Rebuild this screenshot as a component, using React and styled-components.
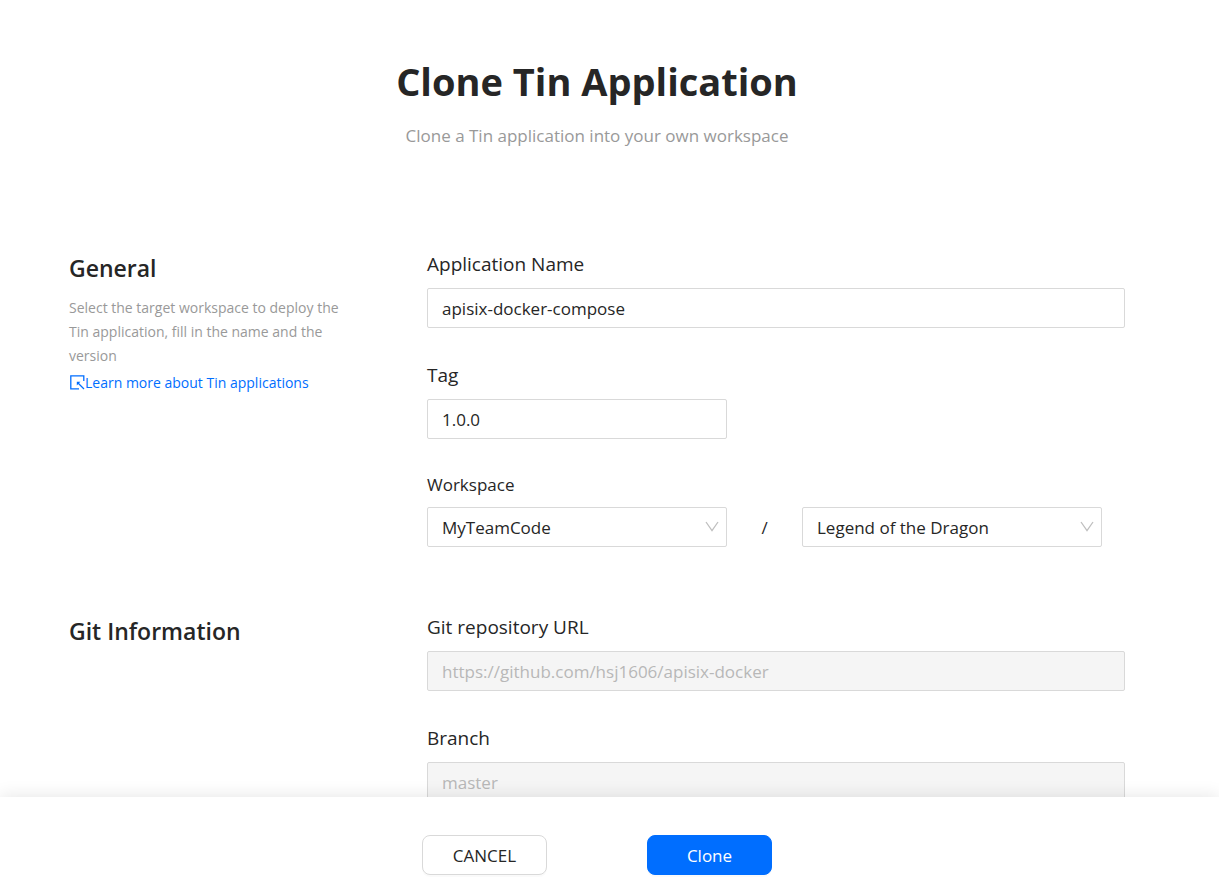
import React from 'react';
import styled, { createGlobalStyle } from 'styled-components';

const GlobalStyles = createGlobalStyle`
  * {
    box-sizing: border-box;
  }
  body {
    margin: 0;
    background: #fff;
    color: #262626;
    font-family: 'Open Sans', 'Noto Sans', sans-serif;
    font-size: 17px;
  }
  input, select, button {
    font-family: inherit;
    font-size: inherit;
  }
`;

const PageStyles = styled.div`
  display: flex;
  flex-direction: column;
  height: 100vh;
`;

const ContentStyles = styled.main`
  flex: 1;
  min-height: 0;
  overflow-y: auto;
  scrollbar-width: none;
  padding: 54px 94px 48px 69px;
`;

const HeaderStyles = styled.header`
  text-align: center;
  margin-bottom: 101px;
`;

const Title = styled.h1`
  margin: 0 0 15px;
  font-size: 38px;
  line-height: 54px;
  font-weight: 700;
`;

const Subtitle = styled.p`
  margin: 0;
  line-height: 26px;
  color: #999;
`;

const SectionStyles = styled.section`
  display: grid;
  grid-template-columns: 283px 1fr;
  column-gap: 75px;
  margin-bottom: 66px;
`;

const SectionTitle = styled.h2`
  margin: 0 0 10px;
  font-size: 23px;
  line-height: 36px;
  font-weight: 600;
`;

const Description = styled.p`
  margin: 0 0 3px;
  font-size: 14px;
  line-height: 24px;
  color: #999;
`;

const LearnMore = styled.a`
  display: flex;
  align-items: center;
  font-size: 14px;
  line-height: 24px;
  color: #006eff;
  text-decoration: none;
`;

const Fields = styled.div`
  display: flex;
  flex-direction: column;
  gap: 33px;
`;

const Field = styled.div`
  display: flex;
  flex-direction: column;
  gap: 10px;
`;

const Label = styled.label`
  font-size: ${({ $small }) => ($small ? '17px' : '19px')};
  line-height: ${({ $small }) => ($small ? '25px' : '28px')};
`;

const TextInput = styled.input`
  width: 100%;
  max-width: ${({ $short }) => ($short ? '300px' : 'none')};
  height: 40px;
  padding: 0 14px;
  border: 1px solid #d9d9d9;
  border-radius: 2px;
  background: #fff;
  color: #262626;
  &:disabled {
    background: #f5f5f5;
    color: #b8b8b8;
  }
`;

const WorkspaceRow = styled.div`
  display: flex;
  align-items: center;
`;

const Separator = styled.span`
  width: 75px;
  text-align: center;
`;

const SelectBox = styled.div`
  position: relative;
  width: 300px;
  select {
    width: 100%;
    height: 40px;
    padding: 0 36px 0 14px;
    border: 1px solid #d9d9d9;
    border-radius: 2px;
    background: #fff;
    color: #262626;
    appearance: none;
  }
  svg {
    position: absolute;
    top: 14px;
    right: 8px;
    pointer-events: none;
  }
`;

const FooterStyles = styled.footer`
  position: relative;
  display: flex;
  justify-content: center;
  gap: 100px;
  padding: 38px 25px 19px 0;
  background: #fff;
  box-shadow: 0 -2px 16px rgba(0, 0, 0, 0.09);
`;

const Button = styled.button`
  width: 125px;
  height: 40px;
  padding: 0;
  border: 1px solid ${({ $primary }) => ($primary ? '#006eff' : '#d9d9d9')};
  border-radius: 8px;
  background: ${({ $primary }) => ($primary ? '#006eff' : '#fff')};
  color: ${({ $primary }) => ($primary ? '#fff' : '#262626')};
  box-shadow: 0 2px 0 rgba(0, 0, 0, 0.02);
`;

function LinkIcon() {
  return (
    <svg width="16" height="18" viewBox="0 0 16 18" fill="none" stroke="currentColor">
      <path d="M14.8 7V1.8H1.8V14.8H10" strokeWidth="1.3" />
      <path d="M9 9L15 15" strokeWidth="1.3" />
      <path d="M7.8 7.8H11.4L7.8 11.4Z" fill="currentColor" stroke="none" />
    </svg>
  );
}

function ArrowDown() {
  return (
    <svg width="14" height="12" viewBox="0 0 14 12" fill="none" stroke="#bfbfbf">
      <path d="M1 1L7 9.5L13 1" strokeWidth="1.3" />
    </svg>
  );
}

function Select({ id, value, label }) {
  return (
    <SelectBox>
      <select id={id} defaultValue={value} aria-label={label}>
        <option value={value}>{value}</option>
      </select>
      <ArrowDown />
    </SelectBox>
  );
}

function GeneralSection() {
  return (
    <SectionStyles>
      <div>
        <SectionTitle>General</SectionTitle>
        <Description>
          Select the target workspace to deploy the Tin application, fill in the
          name and the version
        </Description>
        <LearnMore href="#learn">
          <LinkIcon />
          Learn more about Tin applications
        </LearnMore>
      </div>
      <Fields>
        <Field>
          <Label htmlFor="name">Application Name</Label>
          <TextInput id="name" defaultValue="apisix-docker-compose" />
        </Field>
        <Field>
          <Label htmlFor="tag">Tag</Label>
          <TextInput id="tag" $short defaultValue="1.0.0" />
        </Field>
        <Field>
          <Label htmlFor="team" $small>Workspace</Label>
          <WorkspaceRow>
            <Select id="team" value="MyTeamCode" />
            <Separator>/</Separator>
            <Select id="project" value="Legend of the Dragon" label="Project" />
          </WorkspaceRow>
        </Field>
      </Fields>
    </SectionStyles>
  );
}

function GitSection() {
  return (
    <SectionStyles>
      <div>
        <SectionTitle>Git Information</SectionTitle>
      </div>
      <Fields>
        <Field>
          <Label htmlFor="repo">Git repository URL</Label>
          <TextInput id="repo" disabled defaultValue="https://github.com/hsj1606/apisix-docker" />
        </Field>
        <Field>
          <Label htmlFor="branch">Branch</Label>
          <TextInput id="branch" disabled defaultValue="master" />
        </Field>
      </Fields>
    </SectionStyles>
  );
}

function App() {
  return (
    <PageStyles>
      <GlobalStyles />
      <ContentStyles>
        <HeaderStyles>
          <Title>Clone Tin Application</Title>
          <Subtitle>Clone a Tin application into your own workspace</Subtitle>
        </HeaderStyles>
        <GeneralSection />
        <GitSection />
      </ContentStyles>
      <FooterStyles>
        <Button type="button">CANCEL</Button>
        <Button type="button" $primary>Clone</Button>
      </FooterStyles>
    </PageStyles>
  );
}

export default App;
